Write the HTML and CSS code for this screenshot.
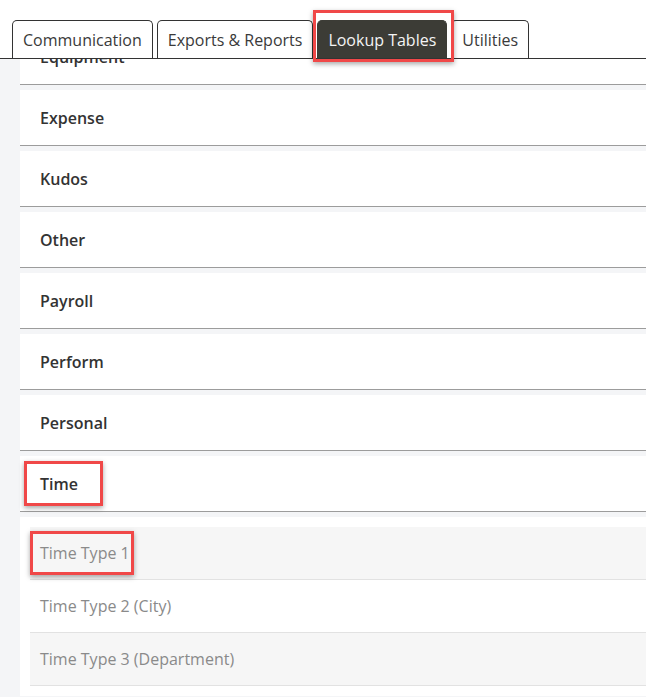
FILE: index.html
```html
<!DOCTYPE html>
<html>
<head>
<meta charset="utf-8">
<link rel="stylesheet" href="styles.css">
</head>
<body>
<div class="page">
  <div class="tabbar">
    <div class="tab">Communication</div>
    <div class="tab">Exports &amp; Reports</div>
    <div class="tab active mark-tab">Lookup Tables</div>
    <div class="tab">Utilities</div>
  </div>
  <div class="content">
    <div class="list">
      <div class="row"><span>Equipment</span></div>
      <div class="row"><span>Expense</span></div>
      <div class="row"><span>Kudos</span></div>
      <div class="row"><span>Other</span></div>
      <div class="row"><span>Payroll</span></div>
      <div class="row"><span>Perform</span></div>
      <div class="row"><span>Personal</span></div>
      <div class="row"><span class="mark-time">Time</span></div>
      <div class="panel">
        <div class="sub odd"><span class="mark-sub">Time Type 1</span></div>
        <div class="sub">Time Type 2 (City)</div>
        <div class="sub odd">Time Type 3 (Department)</div>
      </div>
    </div>
  </div>
</div>
</body>
</html>
```

FILE: styles.css
```css
html, body {
  margin: 0;
  padding: 0;
  background: #ffffff;
}
body {
  font-family: "Open Sans", "Noto Sans", sans-serif;
  width: 646px;
  height: 697px;
  overflow: hidden;
}
.page {
  display: flex;
  flex-direction: column;
  height: 697px;
}
.tabbar {
  display: flex;
  align-items: flex-end;
  gap: 4px;
  padding: 20px 0 0 12px;
  height: 38px;
  border-bottom: 1px solid #333;
  background: #fff;
  position: relative;
  z-index: 2;
}
.tab {
  box-sizing: border-box;
  height: 38px;
  padding: 0 10px;
  display: flex;
  align-items: center;
  border: 1px solid #333;
  border-bottom: none;
  border-radius: 5px 5px 0 0;
  font-size: 16px;
  color: #3a3a3a;
  background: #fff;
}
.tab.active {
  background: #3c3c36;
  border-color: #3c3c36;
  color: #f4f4f4;
}
.mark-tab {
  position: relative;
}
.mark-tab::after {
  content: "";
  position: absolute;
  left: -5px;
  right: -8px;
  top: -11px;
  bottom: -4px;
  border: 3px solid #f04848;
  box-shadow: 0 2px 5px rgba(0,0,0,0.35);
}
.content {
  flex: 1;
  overflow: hidden;
  background: #f4f5f7;
}
.list {
  margin-top: -30px;
  padding-left: 20px;
  display: flex;
  flex-direction: column;
}
.row {
  height: 55px;
  background: #fff;
  border-bottom: 1px solid #9c9c9c;
  margin-bottom: 5px;
  display: flex;
  align-items: center;
  padding-left: 20px;
  font-size: 16px;
  font-weight: 600;
  color: #333;
}
.mark-time {
  position: relative;
}
.mark-time::after {
  content: "";
  position: absolute;
  left: -16px;
  right: -25px;
  top: -12px;
  bottom: -11px;
  border: 3px solid #f04848;
  box-shadow: 0 2px 5px rgba(0,0,0,0.35);
}
.panel {
  background: #fff;
  padding: 10px 0 10px 10px;
}
.sub {
  height: 52px;
  border-bottom: 1px solid #e2e2e2;
  display: flex;
  align-items: center;
  padding-left: 10px;
  font-size: 16px;
  color: #8a8a8a;
  background: #fff;
}
.sub.odd {
  background: #f6f6f6;
}
.mark-sub {
  position: relative;
}
.mark-sub::after {
  content: "";
  position: absolute;
  left: -10px;
  right: -4px;
  top: -11px;
  bottom: -11px;
  border: 3px solid #f04848;
  box-shadow: 0 2px 5px rgba(0,0,0,0.35);
}
```
